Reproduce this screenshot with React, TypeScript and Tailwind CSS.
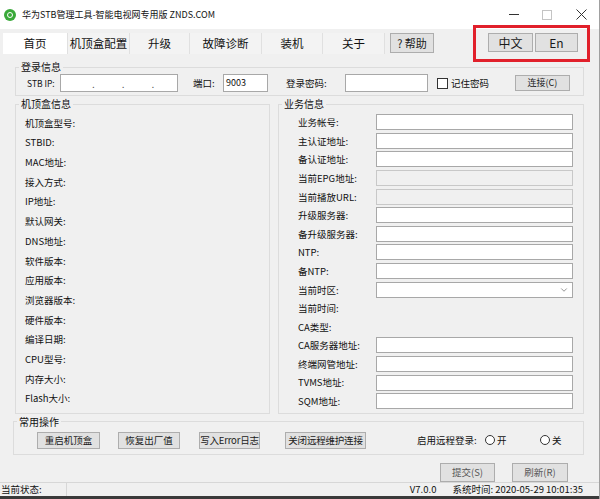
import { ChevronDown } from "lucide-react";

const leftRows = [
  "机顶盒型号:",
  "STBID:",
  "MAC地址:",
  "接入方式:",
  "IP地址:",
  "默认网关:",
  "DNS地址:",
  "软件版本:",
  "应用版本:",
  "浏览器版本:",
  "硬件版本:",
  "编译日期:",
  "CPU型号:",
  "内存大小:",
  "Flash大小:",
];

type RightRow = { label: string; kind: "input" | "disabled" | "select" | "text" };

const rightRows: RightRow[] = [
  { label: "业务帐号:", kind: "input" },
  { label: "主认证地址:", kind: "input" },
  { label: "备认证地址:", kind: "input" },
  { label: "当前EPG地址:", kind: "disabled" },
  { label: "当前播放URL:", kind: "disabled" },
  { label: "升级服务器:", kind: "input" },
  { label: "备升级服务器:", kind: "input" },
  { label: "NTP:", kind: "input" },
  { label: "备NTP:", kind: "input" },
  { label: "当前时区:", kind: "select" },
  { label: "当前时间:", kind: "text" },
  { label: "CA类型:", kind: "text" },
  { label: "CA服务器地址:", kind: "input" },
  { label: "终端网管地址:", kind: "input" },
  { label: "TVMS地址:", kind: "input" },
  { label: "SQM地址:", kind: "input" },
];

const tabs = [
  { name: "首页", w: "w-[65px]", active: true },
  { name: "机顶盒配置", w: "w-[62px]" },
  { name: "升级", w: "w-[60px]" },
  { name: "故障诊断", w: "w-[72px]" },
  { name: "装机", w: "w-[61px]" },
  { name: "关于", w: "w-[62px]" },
];

const Btn = ({ children, className = "" }: { children: React.ReactNode; className?: string }) => (
  <div
    className={`flex items-center justify-center whitespace-nowrap bg-[#e1e1e1] border border-[#adadad] text-[9.5px] text-[#1a1a1a] ${className}`}
  >
    {children}
  </div>
);

const Group = ({
  title,
  className = "",
  children,
}: {
  title: string;
  className?: string;
  children: React.ReactNode;
}) => (
  <fieldset className={`border border-[#dcdcdc] ${className}`}>
    <legend className="ml-[3px] px-[2px] text-[10px] leading-[14px] text-[#111]">{title}</legend>
    {children}
  </fieldset>
);

export default function App() {
  return (
    <div
      className="w-[600px] h-[499px] bg-[#f0f0f0] flex flex-col overflow-hidden text-[#111] border-r border-[#a0a0a0] whitespace-nowrap"
      style={{ fontFamily: '"Noto Sans CJK SC", "Noto Sans", sans-serif' }}
    >
      {/* title bar */}
      <div className="h-[29px] bg-white flex items-center shrink-0">
        <div className="ml-[4px] w-[12px] h-[12px] rounded-full bg-[#3aa93a] flex items-center justify-center">
          <div className="w-[6px] h-[6px] rounded-full border-[1.5px] border-white" />
        </div>
        <div className="ml-[6px] text-[9px] text-[#111]">华为STB管理工具-智能电视网专用版 ZNDS.COM</div>
        <div className="ml-auto flex items-center">
          <div className="w-[33px] flex justify-center">
            <div className="w-[10px] h-px bg-[#333]" />
          </div>
          <div className="w-[33px] flex justify-center">
            <div className="w-[10px] h-[10px] border border-[#c4c4c4]" />
          </div>
          <div className="w-[36px] flex justify-center">
            <svg width="11" height="11" viewBox="0 0 11 11">
              <path d="M0.5 0.5 L10.5 10.5 M10.5 0.5 L0.5 10.5" stroke="#333" strokeWidth="1" />
            </svg>
          </div>
        </div>
      </div>

      {/* tabs */}
      <div className="h-[29px] flex items-start pt-[4px] pl-[3px] shrink-0">
        {tabs.map((t) => (
          <div
            key={t.name}
            className={`${t.w} h-[21px] flex items-center justify-center text-[11.5px] border-r border-[#e0e0e0] ${
              t.active ? "bg-white" : "bg-[#f3f3f3]"
            }`}
          >
            {t.name}
          </div>
        ))}
        <Btn className="ml-[5px] w-[44px] h-[20px] text-[11px]">? 帮助</Btn>
        <div className="ml-[39px] -mt-[8px] w-[117px] h-[37px] border-[3px] border-[#e1202b] flex items-start pt-[5px] pl-[12px] gap-[2px]">
          <Btn className="w-[45px] h-[19px] text-[12px]">中文</Btn>
          <Btn className="w-[43px] h-[19px] text-[12px]">En</Btn>
        </div>
      </div>

      {/* login */}
      <Group title="登录信息" className="mx-[15px] mt-[2px] pb-[3px] shrink-0">
        <div className="h-[18px] flex items-center text-[9.5px]">
          <div className="ml-[11px] w-[33px] text-[8.5px]">STB IP:</div>
          <div className="w-[118px] h-[18px] bg-white border border-[#a8a8a8] flex items-center text-[10px] text-[#555]">
            <span className="ml-[31px]">.</span>
            <span className="ml-[27px]">.</span>
            <span className="ml-[27px]">.</span>
          </div>
          <div className="ml-[15px] w-[30px]">端口:</div>
          <div className="w-[45px] h-[18px] bg-white border border-[#a8a8a8] flex items-center pl-[2px] text-[9px]">
            9003
          </div>
          <div className="ml-[18px] w-[59px]">登录密码:</div>
          <div className="w-[83px] h-[18px] bg-white border border-[#a8a8a8]" />
          <div className="ml-[9px] w-[11px] h-[11px] bg-white border border-[#333] shrink-0" />
          <div className="ml-[3px] w-[35px]">记住密码</div>
          <Btn className="ml-[29px] w-[55px] h-[16px] text-[9px]">连接(C)</Btn>
        </div>
      </Group>

      {/* info groups */}
      <div className="flex mx-[15px] mt-[1px] gap-[8px] shrink-0">
        <Group title="机顶盒信息" className="w-[255px] pt-[2px] pb-[3px]">
          {leftRows.map((r) => (
            <div key={r} className="h-[19.7px] flex items-center pl-[9px] text-[9.5px]">
              {r}
            </div>
          ))}
        </Group>
        <Group title="业务信息" className="flex-1 pt-[2px] pb-[2px]">
          {rightRows.map((r) => (
            <div key={r.label} className="h-[18.6px] flex items-center text-[9.5px]">
              <div className="pl-[19px] w-[97px] shrink-0">{r.label}</div>
              {r.kind === "input" && <div className="w-[197px] h-[16px] bg-white border border-[#a8a8a8]" />}
              {r.kind === "disabled" && (
                <div className="w-[197px] h-[16px] bg-[#f0f0f0] border border-[#c8c8c8]" />
              )}
              {r.kind === "select" && (
                <div className="w-[197px] h-[16px] bg-white border border-[#a8a8a8] flex items-center justify-end pr-[3px]">
                  <ChevronDown size={10} strokeWidth={1.5} className="text-[#555]" />
                </div>
              )}
            </div>
          ))}
        </Group>
      </div>

      {/* common ops */}
      <Group title="常用操作" className="ml-[13px] mr-[15px] mt-[1px] pt-[3px] pb-[5px] shrink-0">
        <div className="flex items-center h-[17px] text-[9.5px]">
          <Btn className="ml-[23px] w-[63px] h-[17px]">重启机顶盒</Btn>
          <Btn className="ml-[18px] w-[62px] h-[17px]">恢复出厂值</Btn>
          <Btn className="ml-[19px] w-[61px] h-[17px] tracking-[-0.2px]">写入Error日志</Btn>
          <Btn className="ml-[25px] w-[81px] h-[17px] tracking-[-0.2px]">关闭远程维护连接</Btn>
          <div className="ml-[51px] w-[62px]">启用远程登录:</div>
          <div className="ml-[6px] w-[10px] h-[10px] rounded-full border border-[#333] bg-white shrink-0" />
          <div className="ml-[2px] w-[12px]">开</div>
          <div className="ml-[31px] w-[10px] h-[10px] rounded-full border border-[#333] bg-white shrink-0" />
          <div className="ml-[2px]">关</div>
        </div>
      </Group>

      {/* submit row */}
      <div className="flex mt-[8px] h-[19px] shrink-0">
        <Btn className="ml-[440px] w-[55px] h-[19px] text-[#555]">提交(S)</Btn>
        <Btn className="ml-[17px] w-[56px] h-[19px] text-[#555]">刷新(R)</Btn>
      </div>

      {/* status bar */}
      <div className="mt-auto h-[17px] border-t border-[#d7d7d7] border-b-[3px] border-b-[#3a3a3a] flex items-center text-[9.5px] shrink-0">
        <div className="w-[67px] h-full border-r border-[#d7d7d7] flex items-center pl-[1px]">当前状态:</div>
        <div className="ml-auto mr-[16px]">V7.0.0</div>
        <div className="mr-[16px]">系统时间: 2020-05-29 10:01:35</div>
      </div>
    </div>
  );
}
